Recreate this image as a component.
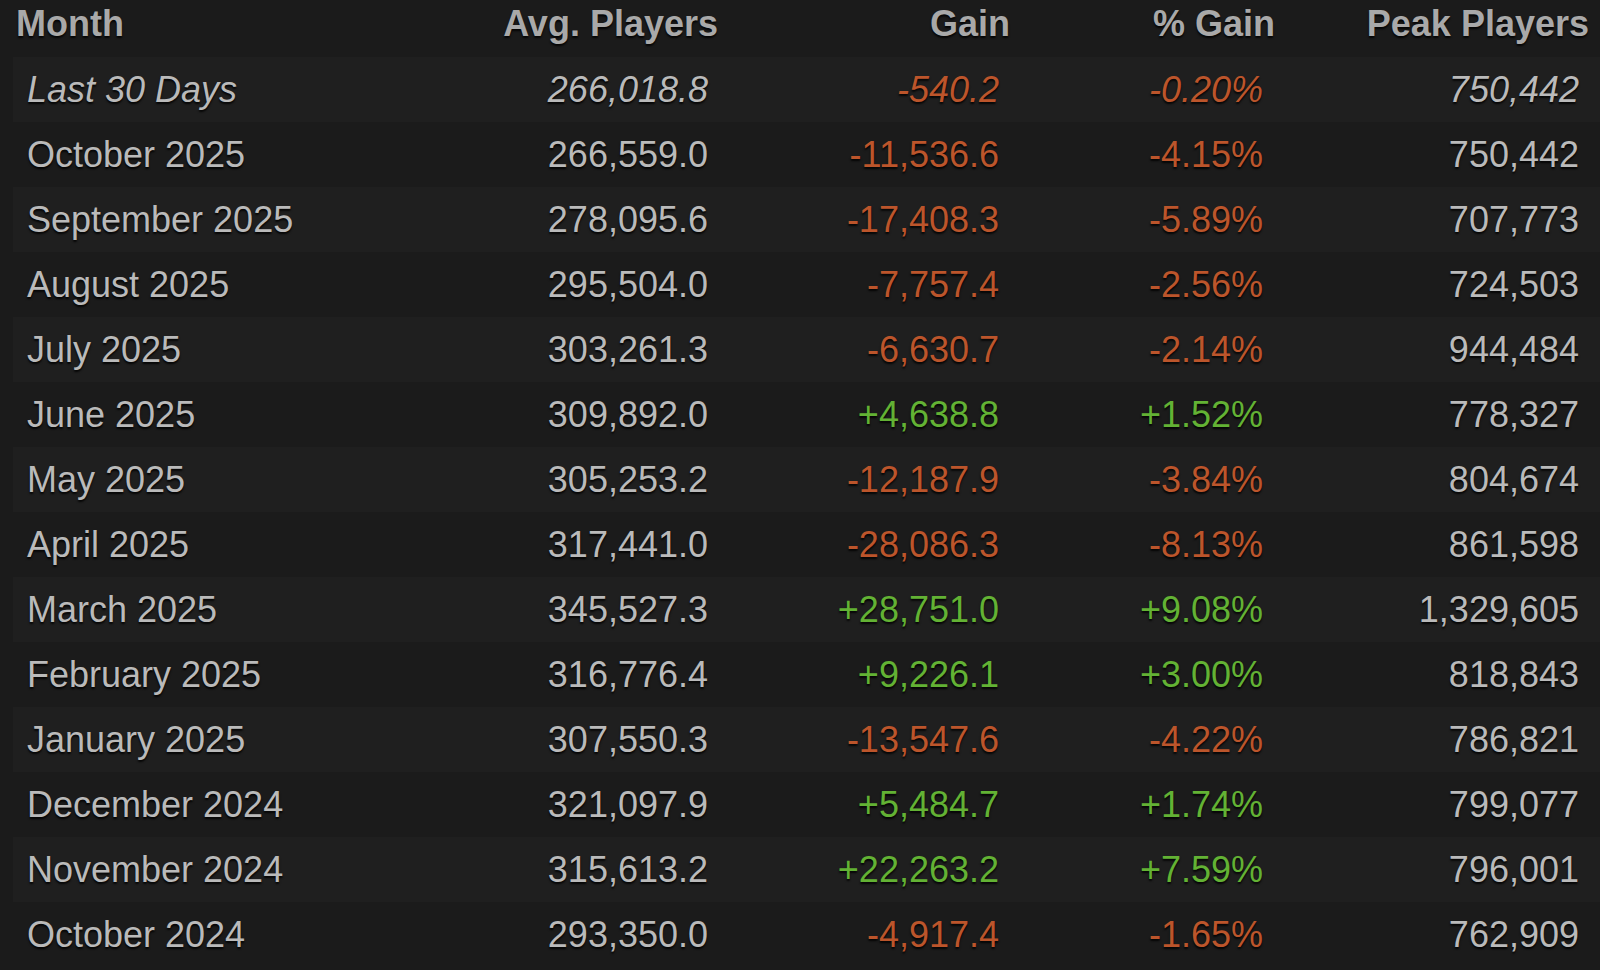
import React from "react";

const rows = [
  ["Last 30 Days", "266,018.8", "-540.2", "-0.20%", "750,442", true],
  ["October 2025", "266,559.0", "-11,536.6", "-4.15%", "750,442"],
  ["September 2025", "278,095.6", "-17,408.3", "-5.89%", "707,773"],
  ["August 2025", "295,504.0", "-7,757.4", "-2.56%", "724,503"],
  ["July 2025", "303,261.3", "-6,630.7", "-2.14%", "944,484"],
  ["June 2025", "309,892.0", "+4,638.8", "+1.52%", "778,327"],
  ["May 2025", "305,253.2", "-12,187.9", "-3.84%", "804,674"],
  ["April 2025", "317,441.0", "-28,086.3", "-8.13%", "861,598"],
  ["March 2025", "345,527.3", "+28,751.0", "+9.08%", "1,329,605"],
  ["February 2025", "316,776.4", "+9,226.1", "+3.00%", "818,843"],
  ["January 2025", "307,550.3", "-13,547.6", "-4.22%", "786,821"],
  ["December 2024", "321,097.9", "+5,484.7", "+1.74%", "799,077"],
  ["November 2024", "315,613.2", "+22,263.2", "+7.59%", "796,001"],
  ["October 2024", "293,350.0", "-4,917.4", "-1.65%", "762,909"],
];

const cols = "grid grid-cols-[408px_300px_291px_264px_316px]";

export default function App() {
  return (
    <div
      className="w-full h-screen bg-[#1b1b1b] overflow-hidden pl-[13px] [text-shadow:0_2px_2px_rgba(0,0,0,0.85)]"
      style={{ fontFamily: '"Liberation Sans", Arial, sans-serif' }}
    >
      <div className={`${cols} h-[57px] pt-[4px] text-[36px] leading-[40px] font-bold text-[#a9a9a9]`}>
        <div className="pl-[3px]">Month</div>
        <div className="text-right pr-[3px]">Avg. Players</div>
        <div className="text-right pr-[2px]">Gain</div>
        <div className="text-right pr-[1px]">% Gain</div>
        <div className="text-right pr-[3px]">Peak Players</div>
      </div>
      {rows.map((r, i) => {
        const pos = r[2].startsWith("+");
        const c = pos ? "text-[#63b234]" : "text-[#bc552b]";
        return (
          <div
            key={i}
            className={`${cols} h-[65px] items-center text-[36px] leading-[40px] text-[#bababa] ${
              i % 2 === 0 ? "bg-[#1f1f1f]" : "bg-[#1b1b1b]"
            } ${r[5] ? "italic" : ""}`}
          >
            <div className="pl-[14px]">{r[0]}</div>
            <div className="text-right pr-[13px]">{r[1]}</div>
            <div className={`text-right pr-[13px] ${c}`}>{r[2]}</div>
            <div className={`text-right pr-[13px] ${c}`}>{r[3]}</div>
            <div className="text-right pr-[13px]">{r[4]}</div>
          </div>
        );
      })}
    </div>
  );
}
